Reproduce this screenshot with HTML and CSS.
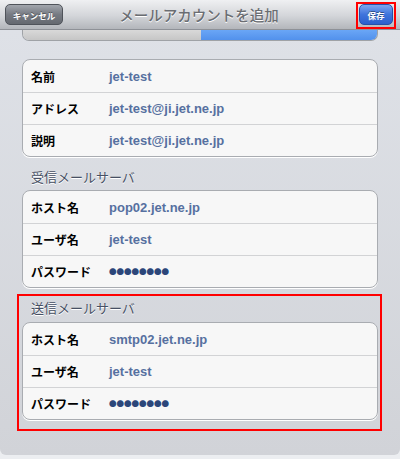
FILE: index.html
```html
<!DOCTYPE html>
<html lang="ja">
<head>
    <meta charset="UTF-8">
    <meta name="viewport" content="width=device-width, initial-scale=1.0">
    <title>メールアカウントを追加</title>
    <link rel="stylesheet" href="styles.css">
</head>
<body>
    <div class="screen">
        <div class="navbar">
            <div class="nav-left"><button class="btn btn-cancel">キャンセル</button></div>
            <h1>メールアカウントを追加</h1>
            <div class="nav-right"><button class="btn btn-save">保存</button></div>
            <div class="mark mark-save"></div>
        </div>
        <div class="strip">
            <div class="strip-left"></div>
            <div class="strip-right"></div>
        </div>

        <div class="group first">
            <div class="row"><span class="label">名前</span><span class="value">jet-test</span></div>
            <div class="row"><span class="label">アドレス</span><span class="value">jet-test@ji.jet.ne.jp</span></div>
            <div class="row"><span class="label">説明</span><span class="value">jet-test@ji.jet.ne.jp</span></div>
        </div>

        <div class="section-title">受信メールサーバ</div>
        <div class="group">
            <div class="row"><span class="label">ホスト名</span><span class="value">pop02.jet.ne.jp</span></div>
            <div class="row"><span class="label">ユーザ名</span><span class="value">jet-test</span></div>
            <div class="row"><span class="label">パスワード</span><span class="dots">●●●●●●●●</span></div>
        </div>

        <div class="marked">
            <div class="section-title">送信メールサーバ</div>
            <div class="group">
                <div class="row"><span class="label">ホスト名</span><span class="value">smtp02.jet.ne.jp</span></div>
                <div class="row"><span class="label">ユーザ名</span><span class="value">jet-test</span></div>
                <div class="row"><span class="label">パスワード</span><span class="dots">●●●●●●●●</span></div>
            </div>
        </div>
    </div>
</body>
</html>
```

FILE: styles.css
```css
body {
    margin: 0;
    background: #eceef1;
    font-family: 'Noto Sans CJK JP', 'Liberation Sans', sans-serif;
}
.screen {
    width: 400px;
    height: 455px;
    background: linear-gradient(#dfe2e8, #d1d3d8);
    border-radius: 0 0 6px 6px;
    overflow: hidden;
}
.navbar {
    position: relative;
    height: 29px;
    display: grid;
    grid-template-columns: 1fr auto 1fr;
    align-items: center;
    padding: 0 7px 0 5px;
    background: linear-gradient(#eff0f2, #d3d5d9 55%, #b3b6bb);
    border-bottom: 1px solid #8e9197;
}
.nav-right {
    display: flex;
    justify-content: flex-end;
}
.navbar h1 {
    margin: 0;
    font-size: 14.5px;
    font-weight: 500;
    color: #6a6d72;
    text-shadow: 0 1px 0 #fff;
}
.btn {
    display: block;
    height: 21px;
    padding: 0;
    border-radius: 5px;
    font-family: 'Noto Sans CJK JP', sans-serif;
    font-size: 8.5px;
    font-weight: bold;
    color: #fff;
    text-shadow: 0 -1px 0 rgba(0,0,0,0.4);
}
.btn-cancel {
    width: 58px;
    border: 1px solid #4f535a;
    background: linear-gradient(#a2a6ad, #767a82 50%, #656970);
}
.btn-save {
    width: 34px;
    border: 1px solid #2550a8;
    background: linear-gradient(#7ea6ee, #3f74dc 50%, #2b5fcc);
}
.mark {
    position: absolute;
    border: 2px solid #f00;
}
.mark-save {
    top: 2px;
    right: 4px;
    width: 36px;
    height: 23px;
}
.strip {
    display: flex;
    height: 11px;
    margin: 0 22px;
    border-radius: 0 0 7px 7px;
    overflow: hidden;
    border: 1px solid #9fa2a6;
    border-top: none;
    box-sizing: border-box;
}
.strip-left {
    width: 178px;
    background: linear-gradient(#d9d9d9, #c6c6c6);
}
.strip-right {
    flex: 1;
    background: linear-gradient(#6aa6f6, #5291ec);
}
.group {
    margin: 0 22px;
    background: #f7f7f7;
    border: 1px solid #a9acb1;
    border-radius: 8px;
    box-shadow: 0 1px 0 #fff;
}
.group.first {
    margin-top: 18px;
}
.row {
    height: 32px;
    display: flex;
    align-items: center;
    padding-left: 8px;
}
.row + .row {
    height: 31px;
    border-top: 1px solid #d2d3d5;
}
.label {
    width: 78px;
    font-size: 12px;
    font-weight: bold;
    color: #000;
}
.value {
    font-family: 'Liberation Sans', sans-serif;
    font-size: 13px;
    font-weight: bold;
    color: #5670a0;
}
.dots {
    font-size: 7.5px;
    color: #2b4679;
}
.section-title {
    height: 33px;
    box-sizing: border-box;
    display: flex;
    align-items: flex-end;
    padding: 0 0 4px 31px;
    font-size: 13px;
    color: #475064;
    text-shadow: 0 1px 0 #fff;
}
.marked {
    margin: 6px 18px 0 17px;
    padding: 0 0 9px;
    border: 2px solid #f00;
}
.marked .section-title {
    height: 26px;
    padding: 0 0 5px 12px;
}
.marked .group {
    margin: 0 2px 0 3px;
}
```
